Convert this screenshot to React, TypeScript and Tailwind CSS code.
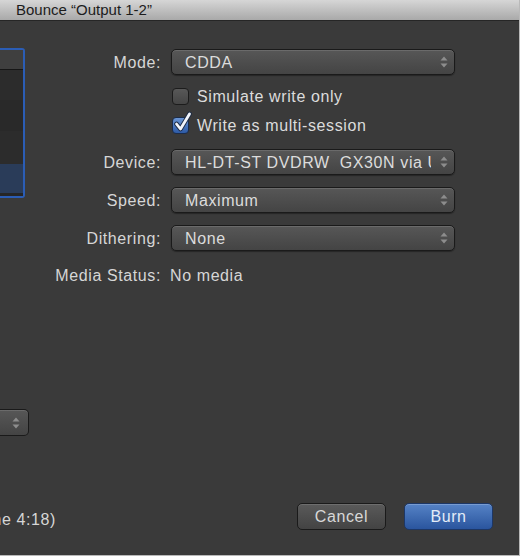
import React from 'react';

function Arrows() {
  return (
    <svg width="8" height="14" viewBox="0 0 8 14" className="shrink-0">
      <polygon points="4,1.5 7.5,5.5 0.5,5.5" fill="#8d8d8d" />
      <polygon points="0.5,8.5 7.5,8.5 4,12.5" fill="#8d8d8d" />
    </svg>
  );
}

function Popup({ value }: { value: string }) {
  return (
    <div className="flex h-[26px] w-[284px] items-center rounded-[5px] border border-[#1a1a1a] bg-linear-to-b from-[#575757] to-[#444444] pl-[13px] pr-[6px] shadow-[inset_0_1px_0_rgba(255,255,255,0.12),0_1px_1px_rgba(0,0,0,0.35)]">
      <span className="mr-[9px] flex-1 overflow-hidden whitespace-pre pt-[1px] text-[#dcdcdc]">{value}</span>
      <Arrows />
    </div>
  );
}

function Checkbox({ checked, label }: { checked?: boolean; label: string }) {
  return (
    <div className="flex h-[22px] items-center">
      <div
        className={
          checked
            ? 'relative ml-[1px] h-[17px] w-[17px] rounded-[4px] border border-[#1b2c4a] bg-linear-to-b from-[#6a95d4] to-[#2d5aa6]'
            : 'relative ml-[1px] h-[17px] w-[17px] rounded-[4px] border border-[#1c1c1c] bg-linear-to-b from-[#585858] to-[#454545]'
        }
      >
        {checked && (
          <svg width="18" height="22" viewBox="0 0 18 22" className="absolute left-[1px] top-[-7px]">
            <path d="M2.5 13 L6.5 18 L15.5 3" fill="none" stroke="#1c2a44" strokeWidth="4.6" strokeLinecap="round" strokeLinejoin="round" />
            <path d="M2.5 13 L6.5 18 L15.5 3" fill="none" stroke="#f2f5fb" strokeWidth="2.8" strokeLinecap="round" strokeLinejoin="round" />
          </svg>
        )}
      </div>
      <span className="ml-[8px] pt-[1px] text-[#dcdcdc]">{label}</span>
    </div>
  );
}

function Label({ children }: { children: React.ReactNode }) {
  return (
    <span className="flex w-[101px] shrink-0 justify-end whitespace-nowrap pt-[1px] text-[#d6d6d6]">{children}</span>
  );
}

function Row({ label, children, className }: { label: string; children: React.ReactNode; className?: string }) {
  return (
    <div className={'flex items-center ' + (className ?? '')}>
      <Label>{label}</Label>
      <div className="ml-[10px]">{children}</div>
    </div>
  );
}

export default function App() {
  return (
    <div className="h-[558px] w-[522px] overflow-hidden bg-white font-['Liberation_Sans',Arial,sans-serif] text-[16px] tracking-[0.6px]">
      <div className="flex h-[556px] w-[520px] flex-col border-b border-r border-[#b9b9b9] bg-[#3a3a3a]">
        {/* Title bar */}
        <div className="flex h-[21px] shrink-0 items-center border-b border-[#262626] bg-linear-to-b from-[#d6d6d6] to-[#a9a9a9] pl-[16px] text-[15px] tracking-normal text-[#1c1c1c]">
          Bounce “Output 1-2”
        </div>

        <div className="flex flex-1">
          {/* Left column, cut off by the window edge */}
          <div className="flex w-[60px] flex-col">
            <div className="mt-[27px] flex h-[150px] w-[25px] flex-col rounded-r-[3px] border-y-2 border-r-2 border-[#2b5db5]">
              <div className="h-[20px] border-b border-[#161616] bg-[#3f3f3f]" />
              <div className="h-[30px] bg-[#2c2c2c]" />
              <div className="h-[31px] bg-[#292929]" />
              <div className="h-[33px] bg-[#2c2c2c]" />
              <div className="h-[29px] bg-[#2a3c59]" />
              <div className="flex-1 bg-[#262626]" />
            </div>
            <div className="mt-[211px] flex h-[27px] w-[29px] items-center justify-end rounded-r-[5px] border-y border-r border-[#1a1a1a] bg-linear-to-b from-[#575757] to-[#444444] pr-[8px] shadow-[inset_0_1px_0_rgba(255,255,255,0.12)]">
              <Arrows />
            </div>
            <div className="mt-[73px] flex h-[20px] w-[56px] items-center justify-end overflow-hidden whitespace-nowrap pt-[1px] text-[#d6d6d6]">
              Total Time 4:18)
            </div>
          </div>

          {/* Form */}
          <div className="flex flex-1 flex-col">
            <div className="flex flex-col pt-[28px]">
              <Row label="Mode:">
                <Popup value="CDDA" />
              </Row>
              <div className="mt-[10px] pl-[111px]">
                <Checkbox label="Simulate write only" />
              </div>
              <div className="mt-[7px] pl-[111px]">
                <Checkbox checked label="Write as multi-session" />
              </div>
              <Row label="Device:" className="mt-[13px]">
                <Popup value="HL-DT-ST DVDRW  GX30N via USB" />
              </Row>
              <Row label="Speed:" className="mt-[12px]">
                <Popup value="Maximum" />
              </Row>
              <Row label="Dithering:" className="mt-[12px]">
                <Popup value="None" />
              </Row>
              <div className="mt-[14px] flex h-[20px] items-center">
                <Label>Media Status:</Label>
                <span className="ml-[9px] pt-[1px] text-[#d6d6d6]">No media</span>
              </div>
            </div>

            <div className="mt-auto flex justify-end gap-[18px] pb-[25px] pr-[26px]">
              <button className="h-[27px] w-[89px] rounded-[5px] border border-[#1a1a1a] bg-linear-to-b from-[#5a5a5a] to-[#434343] text-[#d8d8d8] shadow-[inset_0_1px_0_rgba(255,255,255,0.12)]">
                Cancel
              </button>
              <button className="h-[27px] w-[89px] rounded-[5px] border border-[#1d3766] bg-linear-to-b from-[#5683c6] to-[#2a559e] text-[#e4ecf8] shadow-[inset_0_1px_0_rgba(255,255,255,0.2)]">
                Burn
              </button>
            </div>
          </div>
        </div>
      </div>
    </div>
  );
}
